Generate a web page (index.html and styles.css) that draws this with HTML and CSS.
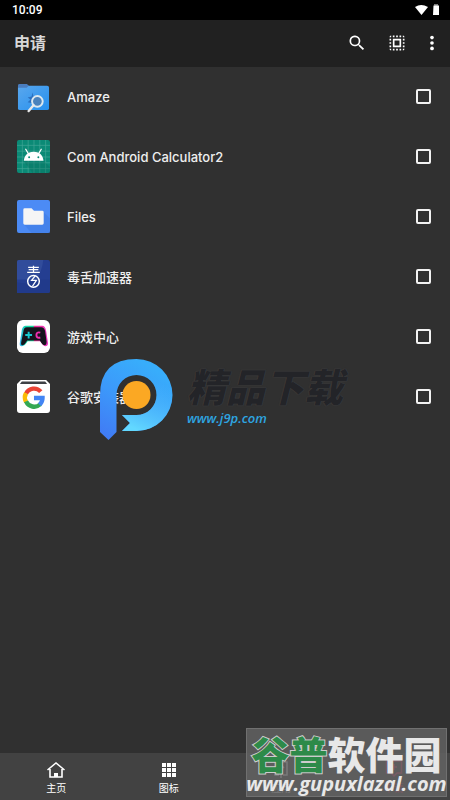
FILE: index.html
```html
<!DOCTYPE html>
<html lang="zh-CN">
<head>
<meta charset="utf-8">
<meta name="viewport" content="width=device-width, initial-scale=1">
<title>申请</title>
<link rel="stylesheet" href="styles.css">
</head>
<body>
<div class="status">
  <span>10:09</span>
  <svg class="status-icons" viewBox="0 0 28 12" aria-hidden="true"><path d="M3 3Q9-1 16 3L9.500 11Z" fill="#fff"/><path d="M21.500 1.500h1V0h3v1.500h1.500V11h-6z" fill="#fff"/><path d="M22.500 0h3v1.500h-3z" fill="#777"/></svg>
</div>
<header class="toolbar">
  <h1>申请</h1>
  <button class="tool" aria-label="搜索"><svg viewBox="0 0 24 24"><path d="M15.500 14h-.79l-.28-.27A6.500 6.500 0 1 0 13.730 14.430l.27.28v.79l5 5 1.500-1.500zM9.500 14a4.500 4.500 0 1 1 0-9 4.500 4.500 0 0 1 0 9z"/></svg></button>
  <button class="tool" aria-label="全选"><svg viewBox="0 0 24 24"><path d="M3 5h2V3a2 2 0 0 0-2 2zm0 8h2v-2H3zm4 8h2v-2H7zM3 9h2V7H3zm10-6h-2v2h2zm6 0v2h2a2 2 0 0 0-2-2zM5 21v-2H3a2 2 0 0 0 2 2zm-2-4h2v-2H3zM9 3H7v2h2zm2 18h2v-2h-2zm8-8h2v-2h-2zm0 8a2 2 0 0 0 2-2h-2zm0-12h2V7h-2zm0 8h2v-2h-2zm-4 4h2v-2h-2zm0-16h2V3h-2zM7 17h10V7H7zm2-8h6v6H9z"/></svg></button>
  <button class="tool more" aria-label="更多"><svg viewBox="0 0 24 24"><circle cx="12" cy="5.500" r="2.200"/><circle cx="12" cy="12" r="2.200"/><circle cx="12" cy="18.500" r="2.200"/></svg></button>
</header>
<main class="content">
  <ul class="apps">
    <li><label class="app">
      <svg class="app-icon" viewBox="0 0 34 34"><defs><linearGradient id="am" x2="1" y2="1"><stop stop-color="#5aa7ed"/><stop offset="1" stop-color="#2590ef"/></linearGradient></defs><path d="M1 6q0-2 2-2h7l3 3h17v6H1z" fill="#4477ba"/><rect x="1" y="6" width="32" height="25" rx="2" fill="url(#am)"/><path d="M1 8V6q0-2 2-2h7l2 2-2 2z" fill="#4a7dbe"/><path d="M16 13l1 4 4-1-1 5-4 3-5-1 3-3-3-2 4-1z" fill="#2b70bf"/><circle cx="21" cy="22" r="5.500" fill="#4a82bc" stroke="#dce8ef" stroke-width="2"/><path d="M17 26l-5 6" stroke="#e8e8e8" stroke-width="2.500" stroke-linecap="round"/></svg>
      <span>Amaze</span><input type="checkbox"></label></li>
    <li><label class="app">
      <svg class="app-icon" viewBox="0 0 34 34"><rect width="34" height="34" rx="2" fill="#0b8a76"/><path d="M5.500 0v34M11.500 0v34M17.500 0v34M23.500 0v34M29.500 0v34M0 5.500h34M0 11.500h34M0 17.500h34M0 23.500h34M0 29.500h34" stroke="#42a695" stroke-width=".7"/><path d="M7 22h21l6 6v6H16z" fill="#056b5c" opacity=".35"/><path d="M7 21.500c.3-5 3.500-9.500 10.200-9.500S27 16.500 27.300 21.500z" fill="#fff"/><path d="M9 9.500l3 5M25 9.500l-3 5" stroke="#fff" stroke-width="1.300" stroke-linecap="round"/><circle cx="12.500" cy="17.700" r="1" fill="#0b8a76"/><circle cx="22" cy="17.700" r="1" fill="#0b8a76"/></svg>
      <span>Com Android Calculator2</span><input type="checkbox"></label></li>
    <li><label class="app">
      <svg class="app-icon" viewBox="0 0 34 34"><rect width="34" height="34" rx="2" fill="#4c8bf5"/><path d="M27 12l7 7v15H15l-8-9z" fill="#3c78e0" opacity=".45"/><path d="M6.500 10q0-1.500 1.500-1.500h7l2.500 2.500H26q1.500 0 1.500 1.500V24q0 1.500-1.500 1.500H8q-1.500 0-1.500-1.500z" fill="#f5f5f5"/></svg>
      <span>Files</span><input type="checkbox"></label></li>
    <li><label class="app">
      <svg class="app-icon" viewBox="0 0 34 34"><rect width="34" height="34" rx="2" fill="#243e91"/><path d="M2 0h25q-1 11-7 20H0V2q0-2 2-2z" fill="#34509e" opacity=".8"/><path d="M20 20h14v12q0 2-2 2H0V23q13 3 20-3z" fill="#213a8b"/><path d="M11.500 7.500h11M12 10h10M10.500 12.800h13M17 6v7" stroke="#fff" stroke-width="1.300"/><circle cx="17" cy="22" r="6" fill="none" stroke="#fff" stroke-width="1.500"/><path d="M19 16l-4 5h5l-4 6" fill="none" stroke="#fff" stroke-width="1.300"/></svg>
      <span>毒舌加速器</span><input type="checkbox"></label></li>
    <li><label class="app">
      <svg class="app-icon" viewBox="0 0 34 34"><defs><linearGradient id="pad"><stop stop-color="#3bb0f0"/><stop offset=".2" stop-color="#16d9b0"/><stop offset=".48" stop-color="#16d99b"/><stop offset=".52" stop-color="#f02e94"/><stop offset="1" stop-color="#ec38c3"/></linearGradient></defs><rect width="34" height="34" rx="6" fill="#fff"/><path d="M9 6h17q3 0 4 5l2 13q0 3-3 3-2 0-5-5H11q-3 5-6 5-3 0-2-4L5 10q1-4 4-4z" fill="url(#pad)"/><path d="M10 7.500h15q3 0 4 4l1.500 11q0 3.500-2 3.500-2 0-5-5h-13q-3 5-5 5-2 0-1-4l2-10q.5-4.500 3.500-4.500z" fill="#15151d"/><path d="M12 12v7M8.500 15.500h7" stroke="#16cad1" stroke-width="2"/><path d="M24 13q-4-1-4 2.500t4 2.500" stroke="#f02eb0" stroke-width="2" fill="none"/></svg>
      <span>游戏中心</span><input type="checkbox"></label></li>
    <li><label class="app">
      <svg class="app-icon" viewBox="0 0 34 34"><path d="M0 4l4-4h26l4 4v27q0 3-3 3H3q-3 0-3-3z" fill="#fff"/><path d="M5 1.500h24l2 2.500H3z" fill="#3e4145"/><g fill="none" stroke-width="4.500"><path d="M24.500 12A9.200 9.200 0 0 0 9.300 14" stroke="#ea4335"/><path d="M9.300 13.500a9.200 9.200 0 0 0 0 9" stroke="#fbbc05"/><path d="M9.300 22a9.200 9.200 0 0 0 14.700 3" stroke="#34a853"/><path d="M17.500 18.500h8.800q0 4-3 7" stroke="#4285f4"/></g></svg>
      <span>谷歌安装器</span><input type="checkbox"></label></li>
  </ul>
  <div class="brand">
    <svg class="brand-logo" viewBox="0 0 73 81" aria-hidden="true"><defs><linearGradient id="p" gradientUnits="userSpaceOnUse" x1="5" y1="75" x2="45" y2="5"><stop stop-color="#407df5"/><stop offset=".5" stop-color="#3c98fa"/><stop offset="1" stop-color="#38adfb"/></linearGradient><linearGradient id="q" gradientUnits="userSpaceOnUse" x1="62" y1="24" x2="40" y2="72"><stop stop-color="#50c8ff" stop-opacity="0"/><stop offset="1" stop-color="#62d8ff"/></linearGradient></defs><path d="M0 36.500Q0 0 36.500 0a36 36 0 1 1 0 72H22l8-8-8-8h14.500a20 20 0 1 0-20-20v37L8.500 81 0 73z" fill="url(#p)"/><path d="M36.500 0a36 36 0 1 1 0 72H22l8-8-8-8h14.500a20 20 0 0 0 0-40z" fill="url(#q)"/><circle cx="36.500" cy="36" r="14" fill="#fba823"/></svg>
    <div class="brand-text"><strong>精品下载</strong><span>www.j9p.com</span></div>
  </div>
</main>
<nav class="tabs">
  <a href="#home"><svg viewBox="0 0 20 20"><path d="M1.500 10L10 3l8.500 7M4 9v8h12V9" fill="none" stroke="#fff" stroke-width="1.600"/><path d="M8 17v-4h4v4z" fill="#fff"/></svg><span>主页</span></a>
  <a href="#icons"><svg viewBox="0 0 20 20"><path d="M3 3h4v4H3zm5 0h4v4H8zm5 0h4v4h-4zM3 8h4v4H3zm5 0h4v4H8zm5 0h4v4h-4zM3 13h4v4H3zm5 0h4v4H8zm5 0h4v4h-4z" fill="#fff"/></svg><span>图标</span></a>
  <a href="#apply"><svg viewBox="0 0 20 20"><path d="M8 2H4v13h4M12 2h4v13h-4M10 6v12M7 8l3-3 3 3" fill="none" stroke="#fff" stroke-width="1.500"/></svg><span>应用</span></a>
  <a href="#request" class="active" aria-current="page"><svg viewBox="0 0 20 20"><path d="M2.500 1h15v12H13l-3 3-3-3H2.500zM10 4v6M7 7h6" fill="none" stroke="#ff3b70" stroke-width="1.500"/></svg><span>申请</span></a>
</nav>
<div class="site-mark"><strong><b>谷普</b>软件园</strong><span>www.gupuxlazal.com</span></div>
</body>
</html>
```

FILE: styles.css
```css
* { box-sizing: border-box; }
body {
  margin: 0;
  min-height: 100vh;
  display: flex;
  flex-direction: column;
  position: relative;
  background: #303030;
  color: #eee;
  font-family: Inter, "Noto Sans CJK SC", sans-serif;
}
.status {
  height: 20px;
  padding: 0 10px 0 12px;
  display: flex;
  align-items: center;
  justify-content: space-between;
  background: #000;
  color: #fff;
  font: 500 12px Roboto, sans-serif;
}
.status-icons { width: 28px; height: 12px; }
.toolbar {
  height: 47px;
  padding: 0 6px 2px 14px;
  display: flex;
  align-items: center;
  background: #212121;
}
.toolbar h1 { margin: 0 auto 0 0; font-size: 16px; line-height: 24px; font-weight: 700; color: #d8d8d8; }
.tool { width: 40px; height: 40px; padding: 10px; border: 0; background: none; }
.tool svg { display: block; width: 20px; height: 20px; fill: #fff; }
.tool.more { width: 24px; padding: 10px 2px; margin-left: 3px; }
.content { flex: 1; position: relative; }
.apps { margin: 0; padding: 0; list-style: none; }
.app { height: 60px; padding: 0 19px 1px 17px; display: flex; align-items: center; gap: 17px; font-size: 13px; font-weight: 500; }
.app-icon { width: 33px; height: 33px; flex: none; }
.app span { flex: 1; }
.app input { appearance: none; width: 15px; height: 15px; margin: 0; border: 2px solid #f2f2f2; border-radius: 2px; }
.app input:checked { background: #f2f2f2; }
.brand { position: absolute; left: 100px; top: 292px; display: flex; gap: 14px; pointer-events: none; }
.brand-logo { width: 73px; height: 81px; }
.brand-text { display: flex; flex-direction: column; padding-top: 8px; font-style: italic; }
.brand-text strong { font-size: 39px; line-height: 42px; font-weight: 900; color: #232428; text-shadow: 0 0 1px #505050; }
.brand-text span { font: italic 600 13px/18px "Open Sans", sans-serif; color: #2ea5e0; }
.tabs { height: 47px; display: grid; grid-template-columns: repeat(4, 1fr); background: #424242; }
.tabs a { display: flex; flex-direction: column; align-items: center; padding-top: 7px; color: #fff; text-decoration: none; font-size: 10px; line-height: 16px; }
.tabs svg { width: 20px; height: 20px; }
.tabs .active { color: #ff3b70; }
.site-mark {
  position: absolute;
  right: 3px;
  bottom: 3px;
  width: 201px;
  height: 69px;
  display: flex;
  flex-direction: column;
  align-items: center;
  padding-top: 8px;
  background: rgba(98, 98, 98, .86);
  border: 1px solid #707070;
  color: #e8e8e8;
  white-space: nowrap;
  pointer-events: none;
}
.site-mark strong { font-size: 38px; line-height: 36px; font-weight: 900; }
.site-mark b { color: #2d8a49; -webkit-text-stroke: 2px #ccc; paint-order: stroke fill; }
.site-mark span { font: italic 700 20px/22px "Open Sans", sans-serif; }
```
